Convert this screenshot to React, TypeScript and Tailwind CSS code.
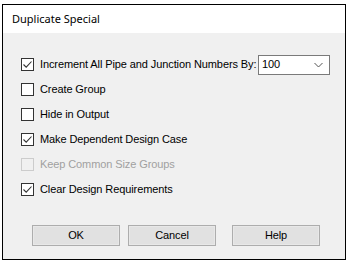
import React from 'react';

const CheckBox = ({ checked, disabled }: { checked?: boolean; disabled?: boolean }) => (
  <div
    className={`w-[13px] h-[13px] border shrink-0 flex items-center justify-center ${
      disabled ? 'border-[#cccccc] bg-[#f0f0f0]' : 'border-[#333333] bg-white'
    }`}
  >
    {checked && (
      <svg width="11" height="11" viewBox="0 0 11 11">
        <path d="M1.5 5.5 L4.2 8.2 L9.5 2.5" fill="none" stroke="#333333" strokeWidth="1.1" />
      </svg>
    )}
  </div>
);

const Row = ({ label, checked, disabled, children }: { label: string; checked?: boolean; disabled?: boolean; children?: React.ReactNode }) => (
  <div className="h-[25px] flex items-center whitespace-nowrap">
    <CheckBox checked={checked} disabled={disabled} />
    <span className={`ml-[6px] ${disabled ? 'text-[#a0a0a0]' : 'text-black'}`}>{label}</span>
    {children}
  </div>
);

const Btn = ({ label }: { label: string }) => (
  <button className="w-[88px] h-[21px] border border-[#adadad] bg-[#e1e1e1] shadow-[inset_0_0_0_1px_#e8e8e8] text-black">
    {label}
  </button>
);

export default function App() {
  return (
    <div className="w-[352px] h-[264px] bg-white pt-[4px] pl-[2px] font-['Liberation_Sans',Arial,sans-serif] text-[11px] tracking-[-0.1px]">
      <div className="w-[344px] h-[256px] border border-black flex flex-col bg-[#f0f0f0]">
        <div className="h-[28px] bg-white flex items-center pl-[9px] font-['Noto_Sans',sans-serif] text-[11px] tracking-normal text-black">
          Duplicate Special
        </div>
        <div className="flex flex-col pt-[19px] pl-[18px]">
          <Row label="Increment All Pipe and Junction Numbers By:" checked>
            <div className="ml-auto mr-[15px] shrink-0 w-[72px] h-[20px] border border-[#7a7a7a] bg-white flex items-center justify-between pl-[3px] pr-[6px]">
              <span>100</span>
              <svg width="9" height="6" viewBox="0 0 9 6">
                <path d="M0.5 1 L4.5 5 L8.5 1" fill="none" stroke="#555555" strokeWidth="1" />
              </svg>
            </div>
          </Row>
          <Row label="Create Group" />
          <Row label="Hide in Output" />
          <Row label="Make Dependent Design Case" checked />
          <Row label="Keep Common Size Groups" disabled />
          <Row label="Clear Design Requirements" checked />
        </div>
        <div className="flex mt-[23px] pl-[29px]">
          <Btn label="OK" />
          <div className="ml-[8px]">
            <Btn label="Cancel" />
          </div>
          <div className="ml-[16px]">
            <Btn label="Help" />
          </div>
        </div>
      </div>
    </div>
  );
}
